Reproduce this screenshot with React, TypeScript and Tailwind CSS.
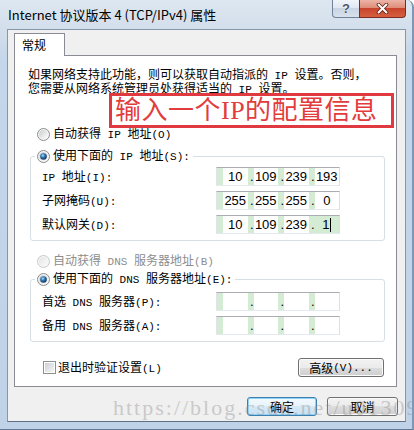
import React from "react";

const ASCII = /^[\x20-\x7e]+$/;

function S({ t }: { t: string }) {
  const parts = t.split(/([\x20-\x7e]+)/).filter(Boolean);
  return (
    <>
      {parts.map((p, i) =>
        ASCII.test(p) ? (
          <span key={i} className="whitespace-pre font-['Liberation_Mono',monospace] text-[11px]">
            {p}
          </span>
        ) : (
          <span key={i}>{p}</span>
        )
      )}
    </>
  );
}

function Radio({ id, checked, disabled }: { id: string; checked?: boolean; disabled?: boolean }) {
  return (
    <svg width="13" height="13" viewBox="0 0 13 13" className="shrink-0">
      <defs>
        <linearGradient id={`${id}g`} x1="0" y1="0" x2="1" y2="1">
          <stop offset="0" stopColor={disabled ? "#e4e4e4" : "#c9cbcd"} />
          <stop offset="1" stopColor={disabled ? "#fbfbfb" : "#ffffff"} />
        </linearGradient>
        <radialGradient id={`${id}d`} cx="0.4" cy="0.35" r="0.7">
          <stop offset="0" stopColor="#a8dcfa" />
          <stop offset="0.45" stopColor="#2c74b4" />
          <stop offset="1" stopColor="#0c2a50" />
        </radialGradient>
      </defs>
      <circle cx="6.5" cy="6.5" r="6" fill="#f6f6f6" stroke={disabled ? "#c8c8c8" : "#8a8b8c"} />
      <circle cx="6.5" cy="6.5" r="4.5" fill={`url(#${id}g)`} />
      {checked && <circle cx="6.5" cy="6.5" r="3.3" fill={`url(#${id}d)`} />}
    </svg>
  );
}

function IPBox({ vals, caret }: { vals: string[]; caret?: boolean }) {
  return (
    <div className="grid h-[19px] w-[124px] grid-cols-4 border border-[#abadb3] border-b-[#e3e9ef] border-l-[#e2e3ea] border-r-[#dbdfe6] bg-white font-['Liberation_Sans',sans-serif] text-[13px] leading-[17px] text-black">
      {vals.map((v, i) => (
        <div key={i} className="flex">
          <div className="w-[6px] bg-[#d4ebd4] text-right">{i > 0 ? "." : ""}</div>
          <div
            className={`flex flex-1 items-center justify-center ${
              caret && i === 3 ? "bg-[#d4ebd4]" : ""
            }`}
          >
            <span>{v}</span>
            {caret && i === 3 && <span className="ml-[1px] h-[14px] w-px bg-black" />}
          </div>
        </div>
      ))}
    </div>
  );
}

function Row({ label, vals, caret }: { label: string; vals: string[]; caret?: boolean }) {
  return (
    <div className="flex h-[19px] items-center">
      <div className="w-[185px] pl-[11px] leading-[16px]">
        <S t={label} />
      </div>
      <IPBox vals={vals} caret={caret} />
    </div>
  );
}

function Btn({ children, w, def }: { children: React.ReactNode; w: string; def?: boolean }) {
  return (
    <div
      className={`flex h-[19px] items-center justify-center rounded-[3px] border leading-[16px] ${w} ${
        def
          ? "border-[#3c7fb1] bg-[linear-gradient(180deg,#f4fafe_0%,#e6f2fa_50%,#d6e9f6_50%,#c9e1f2_100%)] shadow-[inset_0_0_0_1px_#8fd3f5]"
          : "border-[#707070] bg-[linear-gradient(180deg,#f2f2f2_0%,#ebebeb_50%,#dddddd_50%,#cfcfcf_100%)] shadow-[inset_0_0_0_1px_#fbfbfb]"
      }`}
    >
      {children}
    </div>
  );
}

export default function App() {
  return (
    <div className="relative flex h-[430px] w-[414px] flex-col overflow-hidden rounded-tr-[7px] border-r-[2px] border-b border-r-[#7d97b4] border-b-[#5e7895] bg-[linear-gradient(180deg,#dde7f1_0%,#d3dfeb_28px,#c4d6ea_60px,#bfd2e8_100%)] font-['Noto_Sans_CJK_SC',sans-serif] text-black">
      {/* title bar */}
      <div className="flex h-[29px] shrink-0 items-start justify-between">
        <div className="pl-[8px] pt-[6px] text-[13px] leading-[18px] text-black">
          Internet 协议版本 4 (TCP/IPv4) 属性
        </div>
        <div className="mr-[6px] flex">
          <div className="flex h-[18px] w-[27px] items-center justify-center rounded-bl-[4px] border border-t-0 border-r-0 border-[#6f8299] bg-[linear-gradient(180deg,#f0f4f9_0%,#e0e8f1_45%,#c8d4e2_50%,#d8e2ed_100%)]">
            <span className="font-['Liberation_Sans',sans-serif] text-[13px] leading-none font-bold text-[#4a5a70] [text-shadow:0_0_2px_#ffffff]">
              ?
            </span>
          </div>
          <div className="flex h-[18px] w-[47px] items-center justify-center rounded-br-[4px] border border-t-0 border-[#7a2e22] bg-[linear-gradient(180deg,#ecb4a6_0%,#df8e7a_45%,#c8452d_50%,#d65f40_100%)]">
            <svg width="13" height="11" viewBox="0 0 13 11">
              <path d="M2.5 1.5 L10.5 9.5 M10.5 1.5 L2.5 9.5" stroke="#5a2016" strokeWidth="3.6" strokeLinecap="round" />
              <path d="M2.5 1.5 L10.5 9.5 M10.5 1.5 L2.5 9.5" stroke="#ffffff" strokeWidth="2" strokeLinecap="round" />
            </svg>
          </div>
        </div>
      </div>

      {/* client area */}
      <div className="ml-[7px] flex h-[393px] w-[399px] shrink-0 flex-col border border-[#8797aa] border-b-[#5f7185] bg-[#f0f0f0] pl-[6px] pr-[7px] pt-[3px] text-[12px]">
        {/* tab */}
        <div className="relative z-10 -mb-px h-[23px] w-[51px] border border-b-0 border-[#898c95] bg-white pl-[7px] pt-[3px] leading-[16px]">
          常规
        </div>
        {/* panel */}
        <div className="relative flex h-[332px] w-[383px] flex-col border border-[#898c95] bg-white">
          <div className="pl-[13px] pt-[12px] leading-[12px]">
            <div>
              <S t="如果网络支持此功能，则可以获取自动指派的 IP 设置。否则，" />
            </div>
            <div>
              <S t="您需要从网络系统管理员处获得适当的 IP 设置。" />
            </div>
          </div>

          <div className="mt-[30px] flex h-[16px] items-center gap-[3px] pl-[22px] leading-[16px]">
            <Radio id="r1" />
            <span>
              <S t="自动获得 IP 地址(O)" />
            </span>
          </div>

          <div className="relative z-10 mt-[6px] ml-[20px] flex h-[16px] w-fit items-center gap-[3px] bg-white pl-[2px] pr-[3px] leading-[16px]">
            <Radio id="r2" checked />
            <span>
              <S t="使用下面的 IP 地址(S):" />
            </span>
          </div>
          <div className="-mt-[8px] ml-[15px] flex w-[355px] flex-col gap-[5px] rounded-[3px] border border-[#d5dfe5] pb-[6px] pt-[10px]">
            <Row label="IP 地址(I):" vals={["10", "109", "239", "193"]} />
            <Row label="子网掩码(U):" vals={["255", "255", "255", "0"]} />
            <Row label="默认网关(D):" vals={["10", "109", "239", "1"]} caret />
          </div>

          <div className="mt-[12px] flex h-[16px] items-center gap-[3px] pl-[22px] leading-[16px] text-[#8d8d8d]">
            <Radio id="r3" disabled />
            <span>
              <S t="自动获得 DNS 服务器地址(B)" />
            </span>
          </div>

          <div className="relative z-10 mt-[2px] ml-[20px] flex h-[16px] w-fit items-center gap-[3px] bg-white pl-[2px] pr-[3px] leading-[16px]">
            <Radio id="r4" checked />
            <span>
              <S t="使用下面的 DNS 服务器地址(E):" />
            </span>
          </div>
          <div className="-mt-[8px] ml-[15px] flex w-[355px] flex-col gap-[5px] rounded-[3px] border border-[#d5dfe5] pb-[6px] pt-[12px]">
            <Row label="首选 DNS 服务器(P):" vals={["", "", "", ""]} />
            <Row label="备用 DNS 服务器(A):" vals={["", "", "", ""]} />
          </div>

          <div className="mt-[16px] flex h-[19px] items-center justify-between pl-[28px] pr-[12px]">
            <div className="flex items-center gap-[2px] leading-[16px]">
              <div className="flex h-[13px] w-[13px] items-center justify-center border border-[#8e8f8f] bg-white">
                <div className="h-[9px] w-[9px] bg-[linear-gradient(135deg,#cbcfd5_0%,#f6f6f6_100%)]" />
              </div>
              <span>
                <S t="退出时验证设置(L)" />
              </span>
            </div>
            <Btn w="w-[86px]">
              <S t="高级(V)..." />
            </Btn>
          </div>

          {/* red annotation */}
          <div className="absolute left-[94px] top-[37px] flex h-[35px] w-[285px] items-center overflow-hidden border-[3px] border-[#e0393f] pl-[3px]">
            <span className="shrink-0 whitespace-nowrap font-['Liberation_Serif','Noto_Sans_CJK_SC',serif] text-[26px] leading-none tracking-[0.5px] text-[#e23c3c]">
              输入一个IP的配置信息
            </span>
          </div>
        </div>

        {/* bottom buttons */}
        <div className="mt-[10px] flex justify-end gap-[10px]">
          <Btn w="w-[70px]" def>
            确定
          </Btn>
          <Btn w="w-[71px]">取消</Btn>
        </div>
      </div>

      {/* watermark */}
      <div className="pointer-events-none absolute left-[113px] top-[396px] z-20 whitespace-nowrap font-['Liberation_Serif',serif] text-[22px] leading-[24px] tracking-[2px] text-[#909090] opacity-40">
        https://blog.csdn.net/u01309
      </div>
    </div>
  );
}
